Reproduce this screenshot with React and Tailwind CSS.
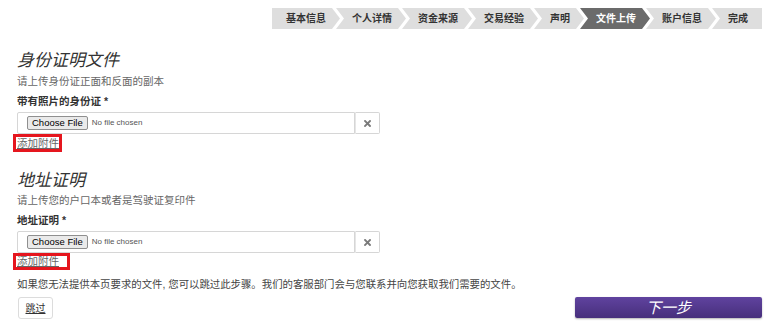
import React from "react";

const FONT = "font-['Liberation_Sans','Noto_Sans_CJK_SC',sans-serif]";

const steps = ["基本信息", "个人详情", "资金来源", "交易经验", "声明", "文件上传", "账户信息", "完成"];

function Breadcrumb() {
  return (
    <nav className="flex justify-end pt-[8px] pr-[12px]">
      {steps.map((s, i) => {
        const first = i === 0;
        const last = i === steps.length - 1;
        const active = s === "文件上传";
        let clip;
        if (first) clip = "[clip-path:polygon(0_0,calc(100%_-_8px)_0,100%_50%,calc(100%_-_8px)_100%,0_100%)]";
        else if (last) clip = "[clip-path:polygon(0_0,100%_0,100%_100%,0_100%,8px_50%)]";
        else clip = "[clip-path:polygon(0_0,calc(100%_-_8px)_0,100%_50%,calc(100%_-_8px)_100%,0_100%,8px_50%)]";
        return (
          <div
            key={s}
            className={`h-[21px] flex items-center text-[10px] font-bold leading-none ${clip} ${
              first ? "pl-[14px]" : "pl-[16px] ml-[-4px]"
            } pr-[14px] ${active ? "bg-[#6b6b6b] text-white" : "bg-[#dedede] text-[#333]"}`}
          >
            {s}
          </div>
        );
      })}
    </nav>
  );
}

function FileInput() {
  return (
    <div className="flex w-[363px] h-[22px]">
      <div className="flex-1 flex items-center border border-[#d6d6d6] rounded-l-[2px] pl-[9px]">
        <span className="h-[14px] flex items-center px-[4px] border border-[#8f8f8f] bg-[#eaeaea] rounded-[2px] text-[9.5px] text-black font-['Liberation_Sans',sans-serif]">
          Choose File
        </span>
        <span className="ml-[4px] text-[8px] text-[#555] font-['Liberation_Sans',sans-serif]">No file chosen</span>
      </div>
      <div className="w-[25px] flex items-center justify-center border border-l-[#e6e6e6] border-[#d6d6d6] rounded-r-[2px]">
        <svg width="7" height="7" viewBox="0 0 7 7">
          <path d="M1 1L6 6M6 1L1 6" stroke="#7a7a7a" strokeWidth="1.9" strokeLinecap="square" />
        </svg>
      </div>
    </div>
  );
}

export default function App() {
  return (
    <div className={`w-[774px] h-[336px] bg-white overflow-hidden text-[#333] ${FONT}`}>
      <Breadcrumb />
      <div className="pl-[17px] pr-[12px] flex flex-col">
        <h2 className="mt-[21px] h-[22px] text-[17px] leading-[22px] italic font-normal text-[#333]">身份证明文件</h2>
        <p className="mt-[2px] h-[14px] text-[10.5px] leading-[14px] text-[#666]">请上传身份证正面和反面的副本</p>
        <p className="mt-[6px] h-[14px] text-[10.5px] leading-[14px] font-bold text-[#333]">带有照片的身份证 *</p>
        <div className="mt-[4px]">
          <FileInput />
        </div>
        <div className="flex">
          <span className="ml-[-4px] h-[18px] border-[3px] border-[#e5161e] pl-[1px] flex items-center">
            <a className="text-[10.5px] leading-[12px] text-[#666] underline">添加附件</a>
          </span>
        </div>

        <h2 className="mt-[18px] h-[22px] text-[17px] leading-[22px] italic font-normal text-[#333]">地址证明</h2>
        <p className="mt-[1px] h-[14px] text-[10.5px] leading-[14px] text-[#666]">请上传您的户口本或者是驾驶证复印件</p>
        <p className="mt-[6px] h-[14px] text-[10.5px] leading-[14px] font-bold text-[#333]">地址证明 *</p>
        <div className="mt-[4px]">
          <FileInput />
        </div>
        <div className="flex">
          <span className="ml-[-4px] h-[17px] border-[3px] border-[#e5161e] pl-[1px] pr-[8px] flex items-center">
            <a className="text-[10.5px] leading-[11px] text-[#666] underline">添加附件</a>
          </span>
        </div>

        <p className="mt-[8px] h-[14px] text-[10.4px] leading-[14px] text-[#444]">
          如果您无法提供本页要求的文件, 您可以跳过此步骤。我们的客服部门会与您联系并向您获取我们需要的文件。
        </p>
        <div className="mt-[5px] flex justify-between items-start">
          <button className="ml-px w-[35px] h-[22px] border border-[#dcdcdc] rounded-[3px] bg-white text-[10px] text-[#333] underline">
            跳过
          </button>
          <button className="w-[187px] h-[21px] rounded-[2px] bg-gradient-to-b from-[#60439f] to-[#472f7c] text-white italic text-[15px] leading-[21px] shadow-[0_1px_2px_rgba(0,0,0,0.3)]">
            下一步
          </button>
        </div>
      </div>
    </div>
  );
}
